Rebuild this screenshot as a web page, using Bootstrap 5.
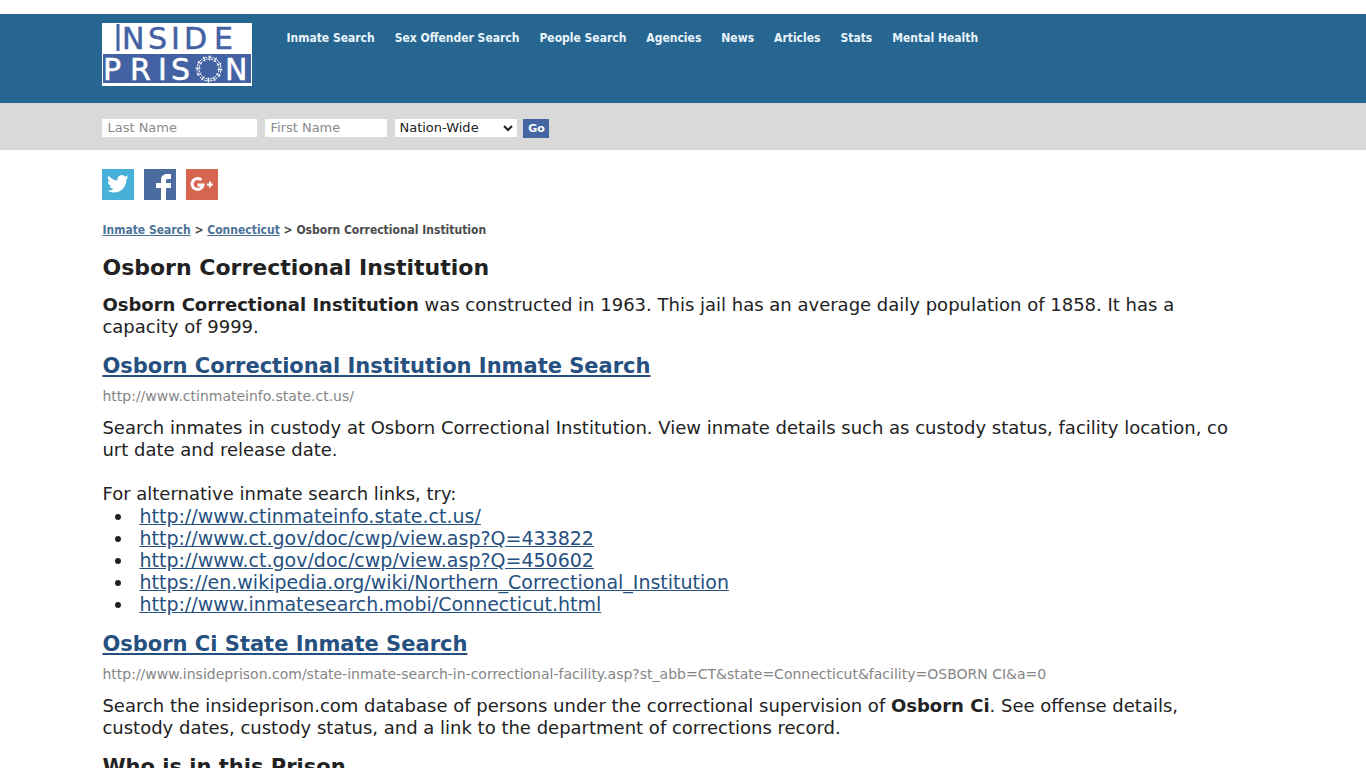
<!DOCTYPE html>
<html lang="en">
<head>
<meta charset="utf-8">
<meta name="viewport" content="width=device-width, initial-scale=1">
<title>Osborn Correctional Institution</title>
<link href="https://cdn.jsdelivr.net/npm/bootstrap@5.3.0/dist/css/bootstrap.min.css" rel="stylesheet">
<style>
body { font-family: "DejaVu Sans", Verdana, sans-serif; font-size: 18px; line-height: 22px; color: #222; background: #fff; }
.page-inset { padding-inline: 7.5%; }
.masthead { margin-top: 14px; min-height: 89px; background: #266691; }
.brand-logo svg, .share-row svg { display: block; }
.masthead .navbar-nav { flex-wrap: wrap; column-gap: 20px; margin-left: 34px; padding-top: 7px; }
.masthead .navbar-nav .nav-link { padding: 0; font: 700 12px/18px "DejaVu Sans Condensed", Tahoma, sans-serif; color: #eaf4fb; }
.search-strip { min-height: 47px; background: #d9d9d9; }
.search-strip .form-control, .search-strip .form-select { height: 18px; min-height: 0; border: 0; border-radius: 0; font-size: 13px; line-height: 18px; padding: 0 5px; color: #222; background-color: #fff; }
.search-strip .form-control::placeholder { color: #8a8a8a; }
.search-strip .form-select { width: 122px; padding-left: 4px; background-image: url("data:image/svg+xml,%3csvg xmlns='http://www.w3.org/2000/svg' viewBox='0 0 10 8'%3e%3cpath fill='none' stroke='%23222' stroke-width='2' d='M1 2l4 4 4-4'/%3e%3c/svg%3e"); background-size: 10px 8px; background-position: right 4px center; }
.search-strip .last-field { width: 155px; }
.search-strip .first-field { width: 122px; }
.go-btn { height: 19px; width: 26px; margin-left: 6px; padding: 0; border: 0; border-radius: 0; background: #4467a3; color: #fff; font-size: 11px; font-weight: 700; line-height: 19px; }
.share-row { gap: 10px; margin-top: 19px; }
.crumbs { font: 700 12px/20px "DejaVu Sans Condensed", Verdana, sans-serif; color: #4c4c4c; margin: 20px 0 15px; }
.crumbs a { color: #4b7398; }
h1, h2 { font-weight: 700; line-height: 26px; }
h1 { font-size: 22px; margin: 0 0 13px; }
h2 { font-size: 21px; margin: 15px 0 7px; }
main a { color: #26507f; }
.source-url { font-size: 14px; line-height: 20px; color: #858585; margin-bottom: 11px; }
.copy-text { margin: 0; }
.alt-links { font-size: 19px; padding-left: 32px; margin: 0 0 16px; }
.alt-links li { padding-left: 5px; }
</style>
</head>
<body>
<header class="masthead page-inset d-flex align-items-start pt-2">
  <a class="brand-logo" href="#" aria-label="Inside Prison">
    <svg width="150" height="64" viewBox="0 0 150 64" font-family="DejaVu Sans, sans-serif" font-size="30" stroke-width=".5">
      <path fill="#fff" d="M0 1h150v63H0z"/>
      <path fill="#4262a3" d="M1 32h148v29H1z"/>
      <path stroke="#4262a3" stroke-width="3" d="M16 2v27"/>
      <text x="20 46 69 82 112" y="27" fill="#4262a3" stroke="#4262a3">NSIDE</text>
      <text x="1 28 56 69" y="58" fill="#fff" stroke="#fff">PRIS</text>
      <text x="123" y="58" fill="#fff" stroke="#fff">N</text>
      <g fill="none" stroke="#fff">
        <circle cx="107" cy="47" r="12" stroke-width="1" stroke-dasharray="4 1"/>
        <circle cx="107" cy="47" r="10" stroke-width="1" stroke-dasharray="3 1"/>
        <circle cx="107" cy="47" r="11" stroke-width="5" stroke-dasharray="1 4.760"/>
      </g>
    </svg>
  </a>
  <nav class="navbar navbar-expand p-0">
    <ul class="navbar-nav">
      <li class="nav-item"><a class="nav-link" href="#">Inmate Search</a></li>
      <li class="nav-item"><a class="nav-link" href="#">Sex Offender Search</a></li>
      <li class="nav-item"><a class="nav-link" href="#">People Search</a></li>
      <li class="nav-item"><a class="nav-link" href="#">Agencies</a></li>
      <li class="nav-item"><a class="nav-link" href="#">News</a></li>
      <li class="nav-item"><a class="nav-link" href="#">Articles</a></li>
      <li class="nav-item"><a class="nav-link" href="#">Stats</a></li>
      <li class="nav-item"><a class="nav-link" href="#">Mental Health</a></li>
    </ul>
  </nav>
</header>

<form class="search-strip page-inset d-flex align-items-start pt-3">
  <input class="form-control last-field me-2" type="text" placeholder="Last Name" aria-label="Last Name">
  <input class="form-control first-field me-2" type="text" placeholder="First Name" aria-label="First Name">
  <select class="form-select" aria-label="State"><option>Nation-Wide</option></select>
  <button class="btn go-btn" type="button">Go</button>
</form>

<main class="page-inset">
  <div class="share-row d-flex">
    <a href="#" aria-label="Twitter"><svg width="32" height="31" viewBox="0 0 32 31"><path fill="#46b0d9" d="M0 0h32v31H0z"/><path fill="#fff" transform="translate(5 4) scale(.9)" d="M23.950 4.570a10 10 0 0 1-2.820.770 4.960 4.960 0 0 0 2.160-2.720c-.950.550-2 .950-3.130 1.180A4.920 4.920 0 0 0 11.780 8.280C7.690 8.090 4.070 6.130 1.640 3.160a4.820 4.820 0 0 0-.660 2.480c0 1.710.870 3.210 2.190 4.100a4.900 4.900 0 0 1-2.230-.620v.060a4.920 4.920 0 0 0 3.950 4.830 5 5 0 0 1-2.210.080 4.940 4.940 0 0 0 4.600 3.420A9.870 9.870 0 0 1 0 19.540a14 14 0 0 0 7.550 2.210c9.050 0 14-7.500 14-13.980l-.020-.640a9.900 9.900 0 0 0 2.420-2.560z"/></svg></a>
    <a href="#" aria-label="Facebook"><svg width="32" height="31" viewBox="0 0 32 31"><path fill="#4c6c9f" d="M0 0h32v31H0z"/><path fill="#fff" d="M17 31V19h-5v-5h5v-2c0-5 2-7 6-7h4v5h-3c-2 0-2 1-2 2v2h5v5h-5v12z"/></svg></a>
    <a href="#" aria-label="Google Plus"><svg width="32" height="31" viewBox="0 0 32 31"><path fill="#d66550" d="M0 0h32v31H0z"/><path fill="none" stroke="#fff" stroke-width="3" d="M15.500 11a5.500 5.500 0 1 0 1.500 5H11.500"/><path stroke="#fff" stroke-width="2" d="M21 15.500h6M24 12.500v6"/></svg></a>
  </div>

  <nav class="crumbs" aria-label="Breadcrumb"><a href="#">Inmate Search</a> &gt; <a href="#">Connecticut</a> &gt; Osborn Correctional Institution</nav>

  <h1>Osborn Correctional Institution</h1>
  <p class="copy-text"><b>Osborn Correctional Institution</b> was constructed in 1963. This jail has an average daily population of 1858. It has a<br>capacity of 9999.</p>

  <h2><a href="#">Osborn Correctional Institution Inmate Search</a></h2>
  <div class="source-url">http://www.ctinmateinfo.state.ct.us/</div>
  <p class="copy-text">Search inmates in custody at Osborn Correctional Institution. View inmate details such as custody status, facility location, co<br>urt date and release date.<br><br>For alternative inmate search links, try:</p>
  <ul class="alt-links">
    <li><a href="#">http://www.ctinmateinfo.state.ct.us/</a></li>
    <li><a href="#">http://www.ct.gov/doc/cwp/view.asp?Q=433822</a></li>
    <li><a href="#">http://www.ct.gov/doc/cwp/view.asp?Q=450602</a></li>
    <li><a href="#">https://en.wikipedia.org/wiki/Northern_Correctional_Institution</a></li>
    <li><a href="#">http://www.inmatesearch.mobi/Connecticut.html</a></li>
  </ul>

  <h2><a href="#">Osborn Ci State Inmate Search</a></h2>
  <div class="source-url">http://www.insideprison.com/state-inmate-search-in-correctional-facility.asp?st_abb=CT&amp;state=Connecticut&amp;facility=OSBORN CI&amp;a=0</div>
  <p class="copy-text">Search the insideprison.com database of persons under the correctional supervision of <b>Osborn Ci</b>. See offense details,<br>custody dates, custody status, and a link to the department of corrections record.</p>

  <h2>Who is in this Prison</h2>
</main>
<script src="https://cdn.jsdelivr.net/npm/bootstrap@5.3.0/dist/js/bootstrap.bundle.min.js"></script>
</body>
</html>
